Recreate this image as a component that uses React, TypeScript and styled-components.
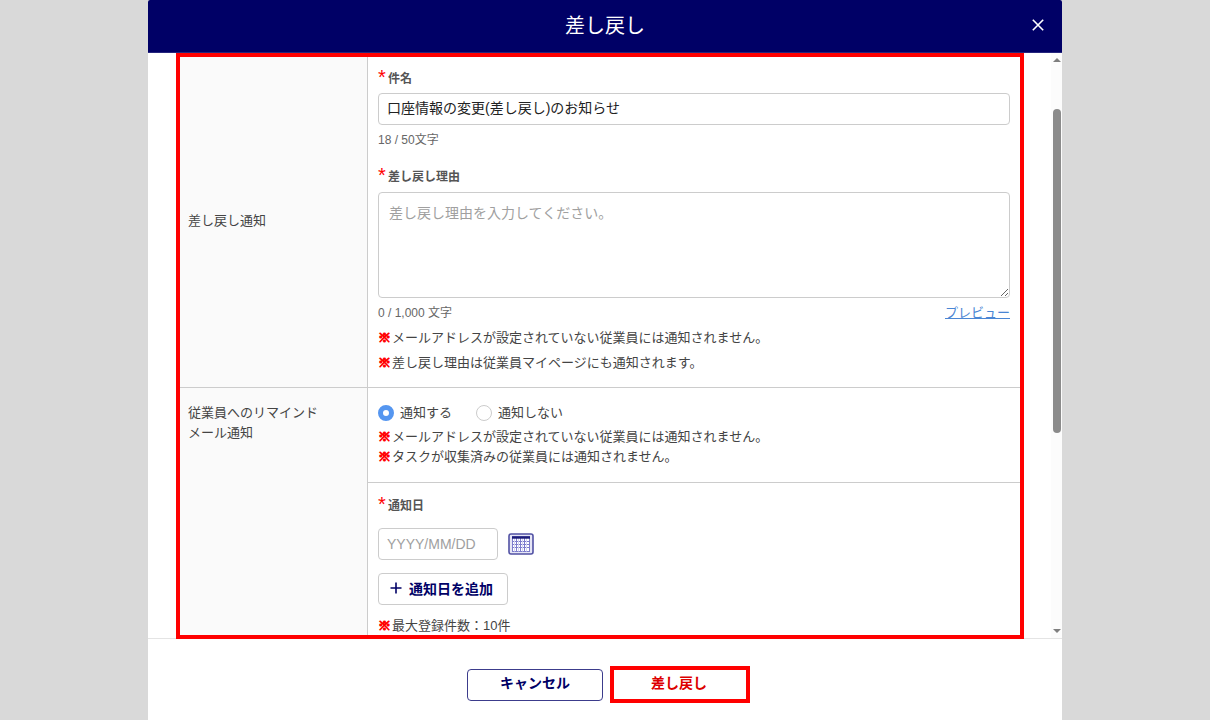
import React, { useState } from "react";
import styled, { createGlobalStyle } from "styled-components";

const navy = "#000066";
const red = "#ff0000";
const line = "#cccccc";

const GlobalStyle = createGlobalStyle`
  *, *::before, *::after { box-sizing: border-box; }
  body {
    margin: 0;
    background: #d9d9d9;
    color: #444444;
    font-family: "Liberation Sans", "Noto Sans CJK JP", sans-serif;
    font-size: 13px;
    line-height: 20px;
  }
  input, textarea, button { font-family: inherit; margin: 0; }
`;

const Overlay = styled.div`
  height: 100vh;
  padding: 0 148px;
`;

const Dialog = styled.section`
  display: flex;
  flex-direction: column;
  height: 100%;
  background: #ffffff;
  border-radius: 2px 2px 0 0;
  overflow: hidden;
`;

const Header = styled.header`
  display: grid;
  grid-template-columns: 48px 1fr 48px;
  align-items: center;
  flex: none;
  height: 53px;
  background: ${navy};
  border-bottom: 1px solid #26267d;
  color: #ffffff;
`;

const Title = styled.h1`
  grid-column: 2;
  margin: 0;
  font-size: 20px;
  line-height: 28px;
  font-weight: 400;
  text-align: center;
`;

const CloseButton = styled.button`
  display: flex;
  align-items: center;
  justify-content: center;
  height: 32px;
  padding: 0 0 2px;
  border: 0;
  background: none;
  color: inherit;
`;

const Body = styled.main`
  display: flex;
  flex: 1;
  min-height: 0;
  padding-left: 28px;
`;

const Frame = styled.div`
  position: relative;
  z-index: 1;
  flex: 1;
  min-width: 0;
  margin: 0 27px -1px 0;
  border: 4px solid ${red};
  overflow: hidden;
`;

const ScrollTrack = styled.div`
  display: flex;
  flex-direction: column;
  align-items: center;
  width: 11px;
  padding: 5px 0;
  background: #fcfcfc;
`;

const ScrollSpace = styled.div<{ $grow: number }>`
  flex: ${(p) => p.$grow};
`;

const ScrollThumb = styled.div`
  flex: 323;
  width: 8px;
  border-radius: 4px;
  background: #8b8b8b;
`;

const Table = styled.table`
  width: 100%;
  border-collapse: separate;
  border-spacing: 0;
  table-layout: fixed;
`;

const HeadCell = styled.th<{ $top?: boolean }>`
  width: 188px;
  padding: ${(p) => (p.$top ? "15px 8px" : "0 8px 2px")};
  border-right: 1px solid ${line};
  border-bottom: 1px solid ${line};
  background: #fafafa;
  font-weight: 400;
  text-align: left;
  vertical-align: ${(p) => (p.$top ? "top" : "middle")};
`;

const Cell = styled.td<{ $pad: string }>`
  padding: ${(p) => p.$pad};
  border-bottom: 1px solid ${line};
  vertical-align: top;
`;

const FieldLabel = styled.label<{ $gap: number }>`
  display: flex;
  align-items: flex-start;
  margin-bottom: ${(p) => p.$gap}px;
  color: #555555;
  font-size: 12px;
  font-weight: 700;
`;

const Required = styled.span`
  width: 10px;
  color: ${red};
  font-size: 20px;
  line-height: 16px;
  font-weight: 400;
`;

const TextInput = styled.input`
  display: block;
  width: 100%;
  height: 32px;
  padding: 0 8px 4px;
  border: 1px solid ${line};
  border-radius: 4px;
  background: #ffffff;
  color: #222222;
  font-size: 14px;
`;

const DateInput = styled(TextInput)`
  width: 120px;
  padding-bottom: 0;
  &::placeholder { color: #a0a0a0; }
`;

const TextArea = styled.textarea`
  display: block;
  width: 100%;
  height: 106px;
  padding: 10px;
  border: 1px solid ${line};
  border-radius: 4px;
  background: #ffffff;
  color: #222222;
  font-size: 14px;
  line-height: 20px;
  resize: vertical;
  &::placeholder { color: #a0a0a0; }
`;

const Count = styled.p`
  margin: 0;
  color: #666666;
  font-size: 12px;
`;

const Field = styled.div`
  display: flex;
  flex-direction: column;
  margin-bottom: 17px;
  ${Count} { margin-top: 5px; }
`;

const CountRow = styled.div`
  display: flex;
  justify-content: space-between;
  margin: 5px 0 2px;
`;

const PreviewLink = styled.a`
  color: #4a86d4;
  text-decoration: underline;
`;

const Note = styled.p<{ $tall?: boolean }>`
  margin: 0;
  line-height: ${(p) => (p.$tall ? 25 : 20)}px;
`;

const Mark = styled.span`
  display: inline-block;
  width: 14px;
  color: ${red};
  font-weight: 700;
  -webkit-text-stroke: 1px ${red};
`;

const RadioGroup = styled.div`
  display: flex;
  gap: 24px;
  margin-bottom: 4px;
`;

const RadioLabel = styled.label`
  display: flex;
  align-items: center;
  gap: 6px;
`;

const Radio = styled.input`
  appearance: none;
  width: 16px;
  height: 16px;
  margin: 0;
  border: 1px solid ${line};
  border-radius: 50%;
  background: #ffffff;
  &:checked { border: 5px solid #5596f0; }
`;

const DateRow = styled.div`
  display: flex;
  align-items: center;
  gap: 10px;
  margin-bottom: 13px;
`;

const IconButton = styled.button`
  display: flex;
  padding: 0;
  border: 0;
  background: none;
`;

const AddButton = styled.button`
  display: flex;
  align-items: center;
  gap: 7px;
  width: 130px;
  height: 32px;
  margin-bottom: 11px;
  padding: 0 0 2px 11px;
  border: 1px solid ${line};
  border-radius: 4px;
  background: #ffffff;
  color: ${navy};
  font-size: 14px;
  font-weight: 700;
`;

const Footer = styled.footer`
  display: flex;
  align-items: center;
  justify-content: center;
  gap: 7px;
  flex: none;
  padding: 27px 0 17px 7px;
  border-top: 1px solid #e4e4e4;
`;

const CancelButton = styled.button`
  width: 136px;
  height: 32px;
  padding: 0 0 5px;
  border: 1px solid #3c3c8c;
  border-radius: 4px;
  background: #ffffff;
  color: ${navy};
  font-size: 14px;
  font-weight: 700;
`;

const RejectButton = styled.button`
  width: 140px;
  height: 37px;
  padding: 0 2px 5px 0;
  border: 4px solid ${red};
  background: #ffffff;
  color: #dd0000;
  font-size: 14px;
  font-weight: 700;
`;

const CloseIcon = () => (
  <svg width="14" height="14" viewBox="0 0 14 14" aria-hidden="true">
    <path d="M1.8 1.8l10.4 10.4M12.2 1.8L1.8 12.2" stroke="currentColor" strokeWidth="1.6" fill="none" />
  </svg>
);

const PlusIcon = () => (
  <svg width="12" height="12" viewBox="0 0 12 12" aria-hidden="true">
    <path d="M6 0.5v11M0.5 6h11" stroke="currentColor" strokeWidth="1.6" fill="none" />
  </svg>
);

const CalendarIcon = () => (
  <svg width="26" height="22" viewBox="0 0 26 22" aria-hidden="true">
    <rect x="1" y="1" width="24" height="20" rx="2" fill="#e6e6f6" stroke="#5252a4" strokeWidth="1.6" />
    <rect x="4.5" y="3.5" width="17" height="15" fill="#ffffff" stroke="#7c7ccc" />
    <path
      d="M8.5 5v13.5M12.5 5v13.5M16.5 5v13.5M4.5 8.5h17M4.5 11.5h17M4.5 14.5h17"
      stroke="#7c7ccc"
      strokeWidth="1"
      fill="none"
    />
    <path d="M6.5 5v13.5M10.5 5v13.5M14.5 5v13.5M18.5 5v13.5" stroke="#d4d4f2" strokeWidth="1" fill="none" />
    <path d="M4 4.5h18" stroke="#1c1c78" strokeWidth="2.4" />
  </svg>
);

const Arrow = ({ down = false }: { down?: boolean }) => (
  <svg width="8" height="4" viewBox="0 0 8 4" aria-hidden="true">
    <path d={down ? "M0 0h8L4 4z" : "M0 4h8L4 0z"} fill="#7f7f7f" />
  </svg>
);

export default function App() {
  const [subject, setSubject] = useState("口座情報の変更(差し戻し)のお知らせ");
  const [reason, setReason] = useState("");
  const [notify, setNotify] = useState(true);
  return (
    <>
      <GlobalStyle />
      <Overlay>
        <Dialog role="dialog" aria-labelledby="title">
          <Header>
            <Title id="title">差し戻し</Title>
            <CloseButton type="button" aria-label="閉じる">
              <CloseIcon />
            </CloseButton>
          </Header>
          <Body>
            <Frame>
              <Table>
                <tbody>
                  <tr>
                    <HeadCell scope="row">差し戻し通知</HeadCell>
                    <Cell $pad="12px 10px 12px">
                      <Field>
                        <FieldLabel htmlFor="subject" $gap={4}>
                          <Required>*</Required>件名
                        </FieldLabel>
                        <TextInput id="subject" value={subject} onChange={(e) => setSubject(e.target.value)} />
                        <Count>{subject.length} / 50文字</Count>
                      </Field>
                      <FieldLabel htmlFor="reason" $gap={5}>
                        <Required>*</Required>差し戻し理由
                      </FieldLabel>
                      <TextArea
                        id="reason"
                        placeholder="差し戻し理由を入力してください。"
                        value={reason}
                        onChange={(e) => setReason(e.target.value)}
                      />
                      <CountRow>
                        <Count>{reason.length} / 1,000 文字</Count>
                        <PreviewLink href="#preview">プレビュー</PreviewLink>
                      </CountRow>
                      <Note $tall>
                        <Mark>※</Mark>メールアドレスが設定されていない従業員には通知されません。
                      </Note>
                      <Note $tall>
                        <Mark>※</Mark>差し戻し理由は従業員マイページにも通知されます。
                      </Note>
                    </Cell>
                  </tr>
                  <tr>
                    <HeadCell scope="row" rowSpan={2} $top>
                      従業員へのリマインド
                      <br />
                      メール通知
                    </HeadCell>
                    <Cell $pad="15px 10px 15px">
                      <RadioGroup role="radiogroup" aria-label="リマインドメール通知">
                        <RadioLabel>
                          <Radio type="radio" name="notify" checked={notify} onChange={() => setNotify(true)} />
                          通知する
                        </RadioLabel>
                        <RadioLabel>
                          <Radio type="radio" name="notify" checked={!notify} onChange={() => setNotify(false)} />
                          通知しない
                        </RadioLabel>
                      </RadioGroup>
                      <Note>
                        <Mark>※</Mark>メールアドレスが設定されていない従業員には通知されません。
                      </Note>
                      <Note>
                        <Mark>※</Mark>タスクが収集済みの従業員には通知されません。
                      </Note>
                    </Cell>
                  </tr>
                  <tr>
                    <Cell $pad="13px 10px 12px">
                      <FieldLabel htmlFor="date" $gap={12}>
                        <Required>*</Required>通知日
                      </FieldLabel>
                      <DateRow>
                        <DateInput id="date" placeholder="YYYY/MM/DD" />
                        <IconButton type="button" aria-label="カレンダー">
                          <CalendarIcon />
                        </IconButton>
                      </DateRow>
                      <AddButton type="button">
                        <PlusIcon />
                        通知日を追加
                      </AddButton>
                      <Note>
                        <Mark>※</Mark>最大登録件数：10件
                      </Note>
                    </Cell>
                  </tr>
                </tbody>
              </Table>
            </Frame>
            <ScrollTrack aria-hidden="true">
              <Arrow />
              <ScrollSpace $grow={47} />
              <ScrollThumb />
              <ScrollSpace $grow={196} />
              <Arrow down />
            </ScrollTrack>
          </Body>
          <Footer>
            <CancelButton type="button">キャンセル</CancelButton>
            <RejectButton type="button">差し戻し</RejectButton>
          </Footer>
        </Dialog>
      </Overlay>
    </>
  );
}
